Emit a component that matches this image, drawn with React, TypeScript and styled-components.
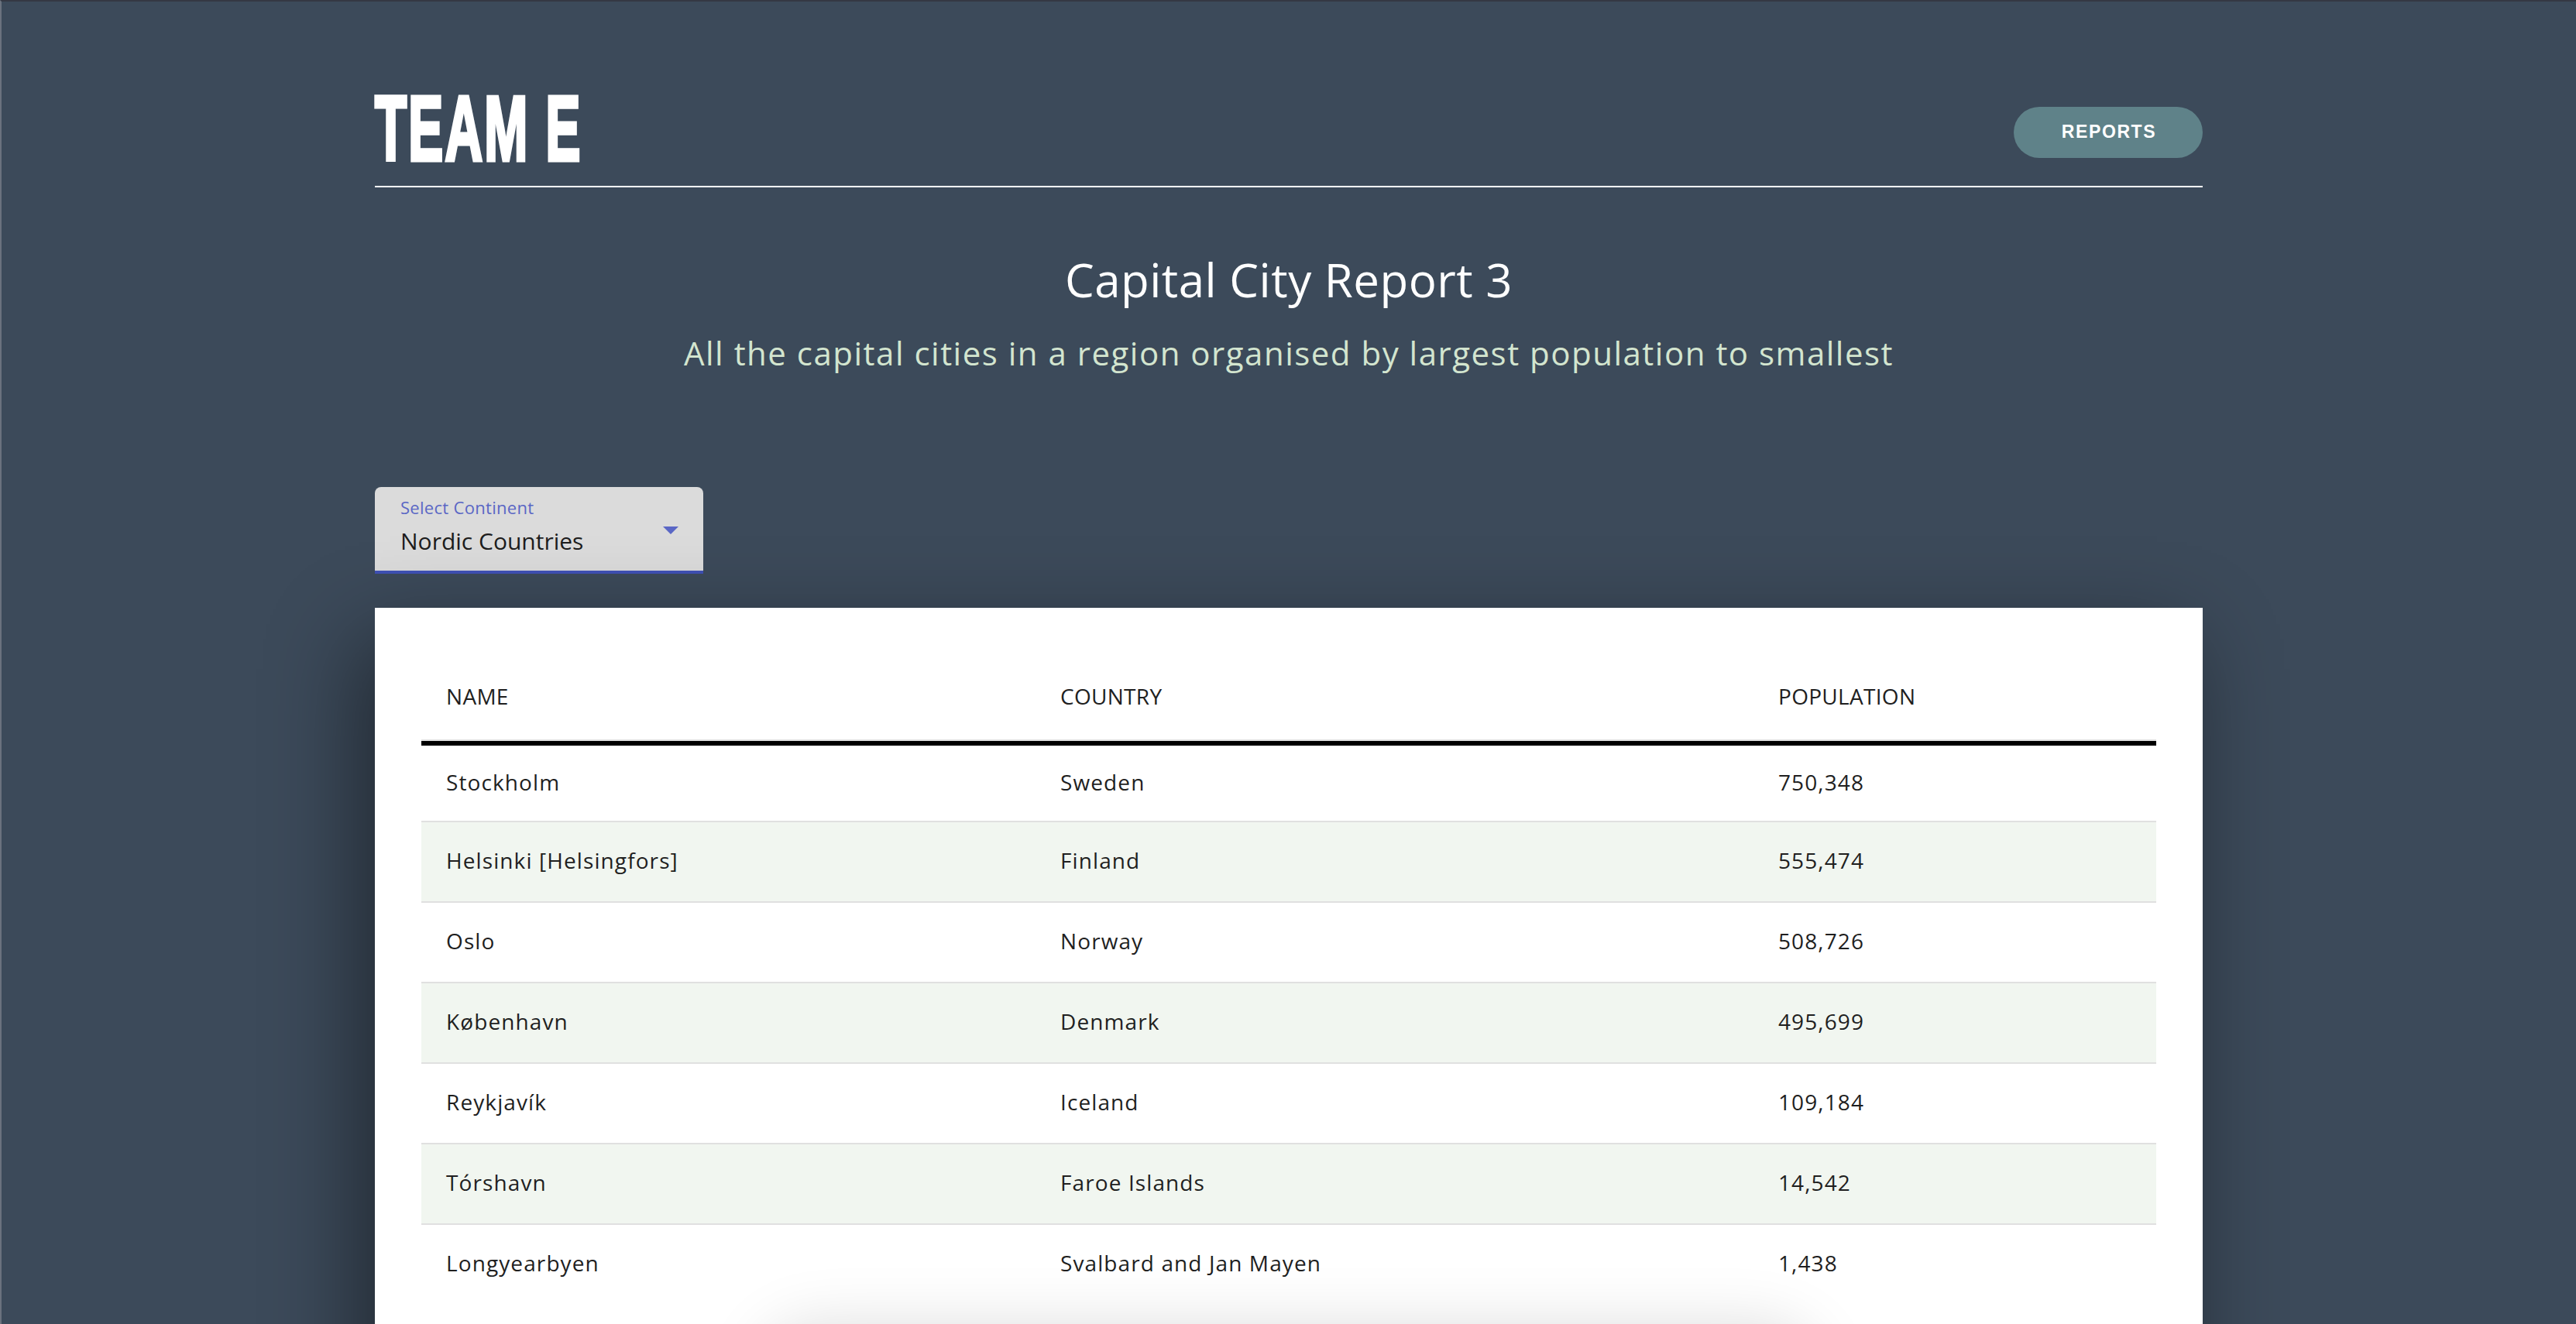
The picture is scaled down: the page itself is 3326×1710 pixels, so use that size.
import React from "react";
import styled, { createGlobalStyle } from "styled-components";

const GlobalStyle = createGlobalStyle`
  html, body {
    margin: 0;
    padding: 0;
    background: #3c4a5a;
  }
  body {
    border-top: 2px solid #343843;
    border-left: 2px solid #6a727e;
    min-height: 1708px;
    font-family: "Open Sans", "Noto Sans", sans-serif;
    overflow: hidden;
  }
`;

const Page = styled.div`
  width: 2360px;
  margin: 0 auto;
  display: flex;
  flex-direction: column;
`;

const Header = styled.header`
  display: flex;
  justify-content: space-between;
  align-items: center;
  padding-top: 104px;
  padding-bottom: 15px;
  border-bottom: 2px solid #ffffff;
`;

const Logo = styled.h1`
  margin: 0;
  height: 119px;
  font-family: "Liberation Sans", Arial, sans-serif;
  font-weight: 700;
  font-size: 119px;
  line-height: 1;
  color: #ffffff;
  -webkit-text-stroke: 5px #ffffff;
  letter-spacing: 4px;
  transform: scaleX(0.565);
  transform-origin: left center;
  white-space: nowrap;
`;

const NavButton = styled.button`
  width: 244px;
  height: 66px;
  margin-top: 10px;
  border: none;
  border-radius: 33px;
  background: #5f8289;
  color: #ffffff;
  font-family: "Liberation Sans", Arial, sans-serif;
  font-weight: 700;
  font-size: 23px;
  letter-spacing: 1.6px;
  padding: 0 0 0 2px;
  cursor: pointer;
`;

const Title = styled.h2`
  margin: 83px 0 0;
  text-align: center;
  font-weight: 400;
  font-size: 60px;
  line-height: 72px;
  color: #ffffff;
  letter-spacing: 0.5px;
`;

const Subtitle = styled.p`
  margin: 34px 0 0;
  text-align: center;
  font-weight: 400;
  font-size: 42px;
  line-height: 50px;
  color: #d3e5cf;
  letter-spacing: 1.5px;
`;

const SelectBox = styled.div`
  margin-top: 148px;
  width: 424px;
  height: 112px;
  box-sizing: border-box;
  background: #dbdbdb;
  border-radius: 8px 8px 0 0;
  border-bottom: 4px solid #3f51b5;
  display: grid;
  grid-template-columns: 1fr auto;
  align-items: center;
  padding: 0 32px 0 33px;
`;

const SelectText = styled.div`
  display: flex;
  flex-direction: column;
  align-self: start;
  padding-top: 13px;
`;

const SelectLabel = styled.span`
  font-size: 22px;
  line-height: 26px;
  color: #5a67c5;
  letter-spacing: 0.3px;
`;

const SelectValue = styled.span`
  margin-top: 13px;
  font-size: 30px;
  line-height: 36px;
  color: #1d1d1d;
  letter-spacing: 0px;
`;

const Arrow = styled.svg`
  width: 20px;
  height: 10px;
  margin-top: 4px;
  display: block;
`;

const Card = styled.section`
  margin-top: 44px;
  background: #ffffff;
  padding: 58px 60px 200px;
  box-shadow: -20px 40px 110px rgba(0, 0, 0, 0.45);
  display: flex;
  flex-direction: column;
  align-items: center;
`;

const Table = styled.table`
  width: 100%;
  border-collapse: separate;
  border-spacing: 0;
  table-layout: fixed;
`;

const HeadCell = styled.th<{ $w: number }>`
  box-sizing: border-box;
  width: ${(p) => p.$w}px;
  text-align: left;
  font-weight: 400;
  font-size: 28px;
  line-height: 40px;
  color: #1f1f1f;
  padding: 36px 32px 36px;
  border-bottom: 2px solid #e0e0e0;
  letter-spacing: 0.3px;
`;

const Row = styled.tr<{ $alt: boolean }>`
  background: ${(p) => (p.$alt ? "#f1f6f0" : "#ffffff")};

  &:first-child td {
    border-top: 6px solid #000000;
    padding-top: 27px;
    padding-bottom: 30px;
  }

  &:last-child td {
    border-bottom: none;
  }
`;

const Cell = styled.td`
  font-size: 28px;
  line-height: 40px;
  color: #1f1f1f;
  padding: 29px 32px 33px;
  border-bottom: 2px solid #e0e0e0;
  letter-spacing: 1.1px;
  white-space: nowrap;
`;

const Footer = styled.div`
  margin-top: 30px;
  width: 1340px;
  height: 120px;
  border-radius: 60px;
  background: #ffffff;
  box-shadow: 0 10px 80px 14px rgba(0, 0, 0, 0.13);
`;

const rows = [
  ["Stockholm", "Sweden", "750,348"],
  ["Helsinki [Helsingfors]", "Finland", "555,474"],
  ["Oslo", "Norway", "508,726"],
  ["København", "Denmark", "495,699"],
  ["Reykjavík", "Iceland", "109,184"],
  ["Tórshavn", "Faroe Islands", "14,542"],
  ["Longyearbyen", "Svalbard and Jan Mayen", "1,438"],
];

export default function App() {
  return (
    <>
      <GlobalStyle />
      <Page>
        <Header>
          <Logo>TEAM E</Logo>
          <NavButton>REPORTS</NavButton>
        </Header>
        <Title>Capital City Report 3</Title>
        <Subtitle>
          All the capital cities in a region organised by largest population to smallest
        </Subtitle>
        <SelectBox>
          <SelectText>
            <SelectLabel>Select Continent</SelectLabel>
            <SelectValue>Nordic Countries</SelectValue>
          </SelectText>
          <Arrow viewBox="0 0 20 10">
            <path d="M0 0 L20 0 L10 10 Z" fill="#5a67c5" />
          </Arrow>
        </SelectBox>
        <Card>
          <Table>
            <thead>
              <tr>
                <HeadCell $w={793}>NAME</HeadCell>
                <HeadCell $w={927}>COUNTRY</HeadCell>
                <HeadCell $w={520}>POPULATION</HeadCell>
              </tr>
            </thead>
            <tbody>
              {rows.map((r, i) => (
                <Row key={r[0]} $alt={i % 2 === 1}>
                  <Cell>{r[0]}</Cell>
                  <Cell>{r[1]}</Cell>
                  <Cell>{r[2]}</Cell>
                </Row>
              ))}
            </tbody>
          </Table>
          <Footer />
        </Card>
      </Page>
    </>
  );
}
